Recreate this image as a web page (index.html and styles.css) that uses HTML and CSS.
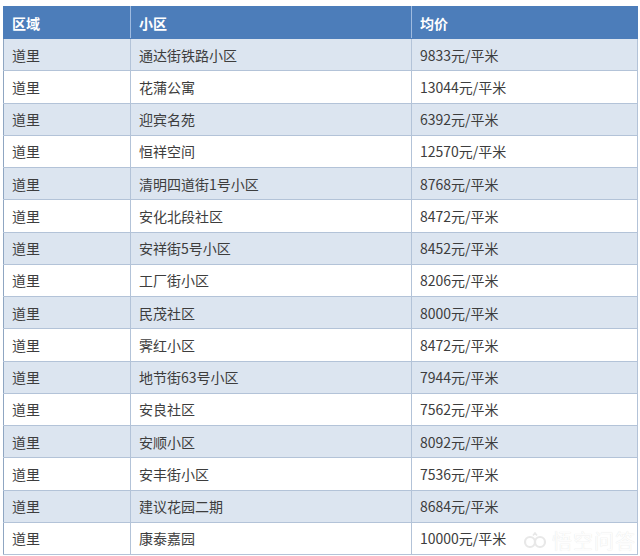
FILE: index.html
```html
<!DOCTYPE html>
<html lang="zh">
<head>
<meta charset="utf-8">
<link rel="stylesheet" href="styles.css">
</head>
<body>
<div class="wrap">
<table class="price-table">
  <colgroup>
    <col class="c1"><col class="c2"><col class="c3">
  </colgroup>
  <thead>
    <tr><th>区域</th><th>小区</th><th>均价</th></tr>
  </thead>
  <tbody>
    <tr><td>道里</td><td>通达街铁路小区</td><td>9833元/平米</td></tr>
    <tr><td>道里</td><td>花蒲公寓</td><td>13044元/平米</td></tr>
    <tr><td>道里</td><td>迎宾名苑</td><td>6392元/平米</td></tr>
    <tr><td>道里</td><td>恒祥空间</td><td>12570元/平米</td></tr>
    <tr><td>道里</td><td>清明四道街1号小区</td><td>8768元/平米</td></tr>
    <tr><td>道里</td><td>安化北段社区</td><td>8472元/平米</td></tr>
    <tr><td>道里</td><td>安祥街5号小区</td><td>8452元/平米</td></tr>
    <tr><td>道里</td><td>工厂街小区</td><td>8206元/平米</td></tr>
    <tr><td>道里</td><td>民茂社区</td><td>8000元/平米</td></tr>
    <tr><td>道里</td><td>霁红小区</td><td>8472元/平米</td></tr>
    <tr><td>道里</td><td>地节街63号小区</td><td>7944元/平米</td></tr>
    <tr><td>道里</td><td>安良社区</td><td>7562元/平米</td></tr>
    <tr><td>道里</td><td>安顺小区</td><td>8092元/平米</td></tr>
    <tr><td>道里</td><td>安丰街小区</td><td>7536元/平米</td></tr>
    <tr><td>道里</td><td>建议花园二期</td><td>8684元/平米</td></tr>
    <tr><td>道里</td><td>康泰嘉园</td><td>10000元/平米</td></tr>
  </tbody>
</table>
<div class="watermark">
  <svg class="wm-logo" width="24" height="18" viewBox="0 0 24 18">
    <circle cx="7" cy="10" r="5" fill="none" stroke="#e8e8e8" stroke-width="2.2"/>
    <circle cx="17" cy="10" r="5" fill="none" stroke="#e8e8e8" stroke-width="2.2"/>
    <path d="M10 3.5 L12 1 L14 3.5" fill="none" stroke="#e8e8e8" stroke-width="1.6"/>
  </svg>
  <span class="wm-text">悟空问答</span>
</div>
</div>
</body>
</html>
```

FILE: styles.css
```css
html, body {
  margin: 0;
  padding: 0;
  background: #ffffff;
}

.wrap {
  position: relative;
  padding: 6px 0 0 3px;
  width: 637px;
}

.price-table {
  width: 634px;
  border-collapse: collapse;
  table-layout: fixed;
  font-family: "Microsoft YaHei", "Noto Sans CJK SC", "Liberation Sans", sans-serif;
  font-size: 14px;
  color: #3d3d3d;
}

.c1 { width: 127px; }
.c2 { width: 281px; }
.c3 { width: 226px; }

.price-table th,
.price-table td {
  box-sizing: border-box;
  text-align: left;
  padding: 0 0 0 8px;
  height: 32.25px;
  border: 1px solid #b3c3d8;
  line-height: 20px;
  white-space: nowrap;
  overflow: hidden;
}

.price-table th {
  background: #4c7dba;
  color: #ffffff;
  font-weight: bold;
  height: 32px;
  border-color: #4c7dba;
  border-left-color: #9fbbe0;
  border-right-color: #9fbbe0;
}

.price-table th:first-child { border-left-color: #4c7dba; }
.price-table th:last-child { border-right-color: #4c7dba; }

.price-table tbody tr:nth-child(odd) td {
  background: #dce5f0;
}

.price-table td:first-child {
  border-left-color: #8fa6c2;
}

.watermark {
  position: absolute;
  left: 523px;
  top: 526px;
  display: flex;
  align-items: center;
  gap: 5px;
}

.wm-text {
  font-family: "Noto Sans CJK SC", sans-serif;
  font-size: 20px;
  font-weight: 400;
  color: #fdfdfd;
  letter-spacing: 1px;
  text-shadow: 0 0 1px #e0e0e0;
}
```
